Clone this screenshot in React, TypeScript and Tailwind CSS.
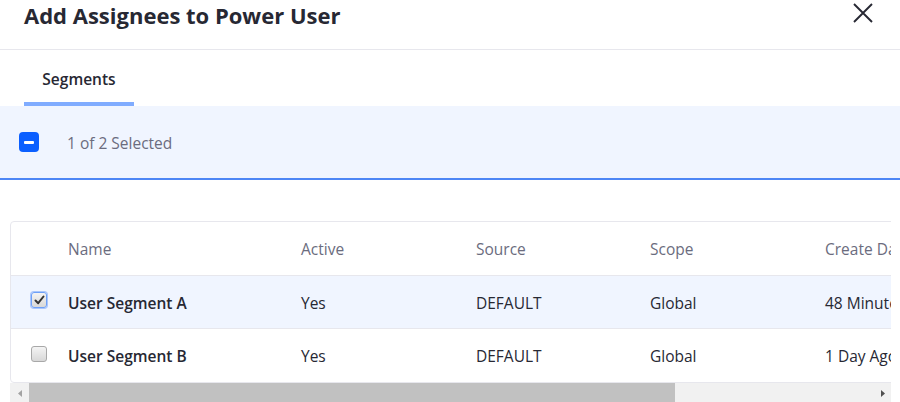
const columns = [
  { key: "name", label: "Name", width: "w-[233px]" },
  { key: "active", label: "Active", width: "w-[175px]" },
  { key: "source", label: "Source", width: "w-[174px]" },
  { key: "scope", label: "Scope", width: "w-[175px]" },
  { key: "created", label: "Create Date", width: "w-[170px]" },
  { key: "modified", label: "Modified Date", width: "w-[180px]" },
];

const rows = [
  {
    id: "a",
    checked: true,
    name: "User Segment A",
    active: "Yes",
    source: "DEFAULT",
    scope: "Global",
    created: "48 Minutes Ago",
    modified: "48 Minutes Ago",
  },
  {
    id: "b",
    checked: false,
    name: "User Segment B",
    active: "Yes",
    source: "DEFAULT",
    scope: "Global",
    created: "1 Day Ago",
    modified: "1 Day Ago",
  },
];

function NativeCheckbox({ checked }: { checked: boolean }) {
  return (
    <div
      className={`flex h-[16px] w-[16px] items-center justify-center rounded-[3px] border bg-gradient-to-b from-[#f4f4f4] to-[#d8d8d8] ${
        checked ? "border-[#6ea0f7] shadow-[0_0_0_1px_#a9c6fb]" : "border-[#a8a8a8]"
      }`}
    >
      {checked && (
        <svg width="11" height="10" viewBox="0 0 11 10" fill="none">
          <path d="M1.5 5.5L4.2 8.2L9.5 1.5" stroke="#333" strokeWidth="2" strokeLinecap="round" strokeLinejoin="round" />
        </svg>
      )}
    </div>
  );
}

export default function App() {
  return (
    <div className="h-[402px] w-[900px] overflow-hidden bg-white font-['Open_Sans',sans-serif] text-[#272833]">
      {/* Header */}
      <div className="flex h-[50px] items-start justify-between border-b border-[#e7e7ed] pl-6 pr-[27px]">
        <h1 className="pt-[1px] text-[22px] font-bold leading-[28px]">Add Assignees to Power User</h1>
        <button className="mt-[3px] text-[#272833]">
          <svg width="20" height="20" viewBox="0 0 20 20" fill="none">
            <path d="M1 1L19 19M19 1L1 19" stroke="currentColor" strokeWidth="1.9" />
          </svg>
        </button>
      </div>

      {/* Tabs */}
      <div className="flex px-6">
        <div className="w-[110px] border-b-4 border-[#80acff] pt-[17px] pb-[11px] text-center text-[15.5px] font-semibold leading-[24px]">
          Segments
        </div>
      </div>

      {/* Selection bar */}
      <div className="flex h-[74px] items-center gap-[28px] border-b-2 border-[#4d86f5] bg-[#f0f5ff] pl-[19px]">
        <div className="flex h-[20px] w-[20px] items-center justify-center rounded-[4px] bg-[#0b5fff]">
          <div className="h-[3px] w-[10px] rounded-[1px] bg-white" />
        </div>
        <span className="pt-[3px] text-[15.5px] text-[#6b6c7e]">1 of 2 Selected</span>
      </div>

      {/* Table */}
      <div className="mx-[10px] mt-[41px] w-[881px] overflow-hidden">
        <div className="w-[1155px] overflow-hidden rounded-[4px] border border-[#e7e7ed]">
          <div className="flex h-[54px] items-center border-b border-[#e7e7ed] pt-[3px] text-[15.5px] text-[#6b6c7e]">
            <div className="w-[45px] shrink-0" />
            {columns.map((c) => (
              <div key={c.key} className={`${c.width} shrink-0 px-3 whitespace-nowrap`}>
                {c.label}
              </div>
            ))}
          </div>
          {rows.map((r, i) => (
            <div
              key={r.id}
              className={`flex h-[53px] items-center text-[15.5px] ${r.checked ? "bg-[#f0f5ff]" : ""} ${
                i < rows.length - 1 ? "border-b border-[#e7e7ed]" : ""
              }`}
            >
              <div className="flex w-[45px] shrink-0 pl-[20px] pb-[4px]">
                <NativeCheckbox checked={r.checked} />
              </div>
              <div className="w-[233px] shrink-0 px-3 pt-[3px] font-semibold">{r.name}</div>
              <div className="w-[175px] shrink-0 px-3 pt-[3px]">{r.active}</div>
              <div className="w-[174px] shrink-0 px-3 pt-[3px]">{r.source}</div>
              <div className="w-[175px] shrink-0 px-3 pt-[3px]">{r.scope}</div>
              <div className="w-[170px] shrink-0 px-3 pt-[3px] whitespace-nowrap">{r.created}</div>
              <div className="w-[180px] shrink-0 px-3 pt-[3px] whitespace-nowrap">{r.modified}</div>
            </div>
          ))}
        </div>

        {/* Horizontal scrollbar */}
        <div className="flex h-[21px] bg-[#f1f1f1]">
          <div className="flex w-[19px] items-center justify-center">
            <svg width="4" height="7" viewBox="0 0 4 7">
              <path d="M4 0V7L0 3.5Z" fill="#a3a3a3" />
            </svg>
          </div>
          <div className="w-[646px] bg-[#c1c1c1]" />
          <div className="flex-1" />
          <div className="flex w-[17px] items-center justify-center">
            <svg width="4" height="7" viewBox="0 0 4 7">
              <path d="M0 0V7L4 3.5Z" fill="#505050" />
            </svg>
          </div>
        </div>
      </div>
    </div>
  );
}
